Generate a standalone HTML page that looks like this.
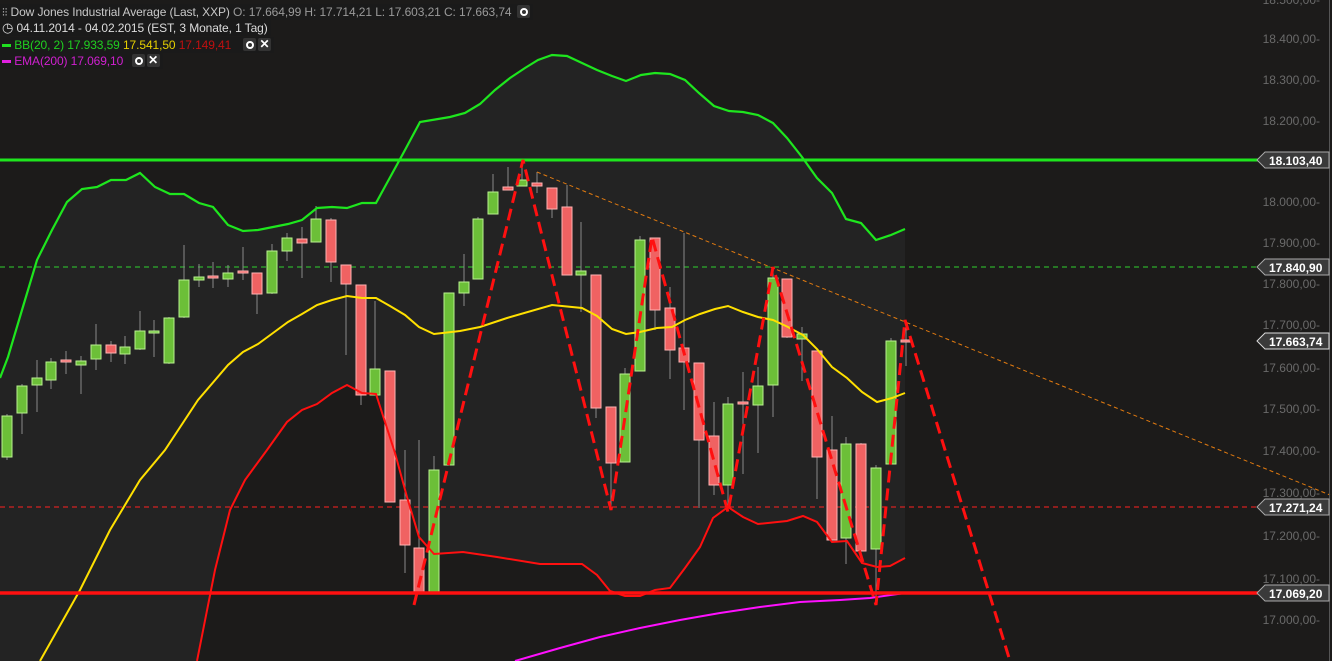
<!DOCTYPE html>
<html><head><meta charset="utf-8"><style>
html,body{margin:0;padding:0;background:#1c1b1a;width:1332px;height:661px;overflow:hidden;font-family:"Liberation Sans",sans-serif}
svg{position:absolute;left:0;top:0}
.g{fill:#6cbf38;stroke:#b9f08f;stroke-width:1}
.r{fill:#f06262;stroke:#ffb3b3;stroke-width:1}
.w{stroke:#8a8a8a;stroke-width:1}
.ax{fill:#6a6a6a;font-size:12px;text-anchor:end}
.lb{fill:#fff;font-size:12px;font-weight:bold}
.leg{position:absolute;left:0;font-size:12px;white-space:nowrap;background:#1a1a1a;padding:0 3px 0 2px;height:16px;line-height:16px;letter-spacing:-0.1px}
.ic{display:inline-block;width:13px;height:13px;background:#333;border-radius:2px;vertical-align:middle;position:relative;top:-1px;color:#fff;font-size:12px;line-height:13px;text-align:center;font-weight:bold;margin-left:2px}
.ic.o:after{content:"";position:absolute;left:3px;top:3px;width:4px;height:4px;border:2px solid #fff;border-radius:50%}
</style></head><body>
<svg width="1332" height="661" viewBox="0 0 1332 661">
<polygon fill="#232323" points="0,378 8,357 22,310 37,260 52,230 67,202 82,189 97,187 111,180 126,180 140,173 155,187 170,194 184,194 199,203 213,207 228,225 243,231 258,230 273,227 288,224 302,220 317,208 332,207 347,208 362,203 376,203 405,150 420,122 450,117 465,113 480,104 495,90 510,78 525,68 538,60 552,55 567,56 582,63 597,70 612,76 626,81 641,75 655,73 670,74 685,80 699,93 714,106 729,111 743,112 758,115 773,123 787,138 802,157 817,178 832,193 846,219 861,223 876,240 891,235 905,229 905,558 890,566 877,567 862,563 847,541 832,542 817,522 803,516 787,521 758,524 743,517 728,507 713,518 700,547 685,568 670,588 655,590 640,596 625,596 610,591 597,575 582,564 540,564 497,557 463,552 440,553 434,554 419,537 407,497 395,453 376,394 362,393 347,385 332,393 317,404 302,410 287,422 267,450 245,480 230,510 215,570 197,661 0,661"/>
<line x1="0" y1="160" x2="1258" y2="160" stroke="#1ee61e" stroke-width="3"/>
<line x1="0" y1="267" x2="1258" y2="267" stroke="#2fd02f" stroke-width="1" stroke-dasharray="5,4"/>
<line x1="0" y1="507" x2="1258" y2="507" stroke="#ff2020" stroke-width="1" stroke-dasharray="5,4"/>
<g>
<line class="w" x1="7" y1="414" x2="7" y2="460"/><rect class="g" x="2" y="416" width="10" height="41"/>
<line class="w" x1="22" y1="384" x2="22" y2="434"/><rect class="g" x="17" y="386" width="10" height="27"/>
<line class="w" x1="37" y1="360" x2="37" y2="412"/><rect class="g" x="32" y="378" width="10" height="7"/>
<line class="w" x1="51" y1="358" x2="51" y2="389"/><rect class="g" x="46" y="362" width="10" height="18"/>
<line class="w" x1="66" y1="351" x2="66" y2="374"/><rect class="r" x="61" y="360" width="10" height="2"/>
<line class="w" x1="81" y1="356" x2="81" y2="394"/><rect class="g" x="76" y="361" width="10" height="4"/>
<line class="w" x1="96" y1="324" x2="96" y2="370"/><rect class="g" x="91" y="345" width="10" height="14"/>
<line class="w" x1="111" y1="341" x2="111" y2="362"/><rect class="r" x="106" y="345" width="10" height="8"/>
<line class="w" x1="125" y1="336" x2="125" y2="364"/><rect class="g" x="120" y="347" width="10" height="7"/>
<line class="w" x1="140" y1="311" x2="140" y2="350"/><rect class="g" x="135" y="331" width="10" height="18"/>
<line class="w" x1="154" y1="320" x2="154" y2="357"/><rect class="g" x="149" y="331" width="10" height="2"/>
<line class="w" x1="169" y1="317" x2="169" y2="364"/><rect class="g" x="164" y="318" width="10" height="45"/>
<line class="w" x1="184" y1="245" x2="184" y2="318"/><rect class="g" x="179" y="280" width="10" height="37"/>
<line class="w" x1="199" y1="264" x2="199" y2="287"/><rect class="g" x="194" y="277" width="10" height="3"/>
<line class="w" x1="213" y1="262" x2="213" y2="288"/><rect class="r" x="208" y="276" width="10" height="2"/>
<line class="w" x1="228" y1="265" x2="228" y2="287"/><rect class="g" x="223" y="273" width="10" height="6"/>
<line class="w" x1="243" y1="247" x2="243" y2="280"/><rect class="r" x="238" y="271" width="10" height="2"/>
<line class="w" x1="257" y1="273" x2="257" y2="314"/><rect class="r" x="252" y="273" width="10" height="21"/>
<line class="w" x1="272" y1="244" x2="272" y2="294"/><rect class="g" x="267" y="251" width="10" height="42"/>
<line class="w" x1="287" y1="233" x2="287" y2="261"/><rect class="g" x="282" y="238" width="10" height="13"/>
<line class="w" x1="302" y1="227" x2="302" y2="278"/><rect class="r" x="297" y="239" width="10" height="4"/>
<line class="w" x1="316" y1="206" x2="316" y2="242"/><rect class="g" x="311" y="219" width="10" height="23"/>
<line class="w" x1="331" y1="218" x2="331" y2="282"/><rect class="r" x="326" y="220" width="10" height="42"/>
<line class="w" x1="346" y1="265" x2="346" y2="355"/><rect class="r" x="341" y="265" width="10" height="19"/>
<line class="w" x1="361" y1="285" x2="361" y2="405"/><rect class="r" x="356" y="285" width="10" height="110"/>
<line class="w" x1="375" y1="301" x2="375" y2="395"/><rect class="g" x="370" y="369" width="10" height="26"/>
<line class="w" x1="390" y1="371" x2="390" y2="502"/><rect class="r" x="385" y="371" width="10" height="131"/>
<line class="w" x1="405" y1="450" x2="405" y2="573"/><rect class="r" x="400" y="500" width="10" height="45"/>
<line class="w" x1="419" y1="440" x2="419" y2="592"/><rect class="r" x="414" y="548" width="10" height="44"/>
<line class="w" x1="434" y1="456" x2="434" y2="592"/><rect class="g" x="429" y="470" width="10" height="122"/>
<line class="w" x1="449" y1="293" x2="449" y2="465"/><rect class="g" x="444" y="293" width="10" height="172"/>
<line class="w" x1="464" y1="254" x2="464" y2="306"/><rect class="g" x="459" y="282" width="10" height="11"/>
<line class="w" x1="478" y1="217" x2="478" y2="279"/><rect class="g" x="473" y="219" width="10" height="60"/>
<line class="w" x1="493" y1="174" x2="493" y2="214"/><rect class="g" x="488" y="192" width="10" height="22"/>
<line class="w" x1="508" y1="167" x2="508" y2="190"/><rect class="r" x="503" y="187" width="10" height="3"/>
<line class="w" x1="522" y1="166" x2="522" y2="186"/><rect class="g" x="517" y="180" width="10" height="6"/>
<line class="w" x1="537" y1="172" x2="537" y2="193"/><rect class="r" x="532" y="183" width="10" height="3"/>
<line class="w" x1="552" y1="188" x2="552" y2="218"/><rect class="r" x="547" y="188" width="10" height="21"/>
<line class="w" x1="567" y1="185" x2="567" y2="275"/><rect class="r" x="562" y="207" width="10" height="68"/>
<line class="w" x1="581" y1="222" x2="581" y2="312"/><rect class="g" x="576" y="271" width="10" height="4"/>
<line class="w" x1="596" y1="275" x2="596" y2="418"/><rect class="r" x="591" y="275" width="10" height="133"/>
<line class="w" x1="611" y1="407" x2="611" y2="507"/><rect class="r" x="606" y="407" width="10" height="56"/>
<line class="w" x1="625" y1="368" x2="625" y2="462"/><rect class="g" x="620" y="374" width="10" height="88"/>
<line class="w" x1="640" y1="236" x2="640" y2="371"/><rect class="g" x="635" y="240" width="10" height="131"/>
<line class="w" x1="655" y1="238" x2="655" y2="330"/><rect class="r" x="650" y="238" width="10" height="72"/>
<line class="w" x1="670" y1="287" x2="670" y2="379"/><rect class="r" x="665" y="308" width="10" height="42"/>
<line class="w" x1="684" y1="233" x2="684" y2="410"/><rect class="r" x="679" y="348" width="10" height="14"/>
<line class="w" x1="699" y1="363" x2="699" y2="508"/><rect class="r" x="694" y="363" width="10" height="77"/>
<line class="w" x1="714" y1="402" x2="714" y2="495"/><rect class="r" x="709" y="436" width="10" height="49"/>
<line class="w" x1="728" y1="397" x2="728" y2="508"/><rect class="g" x="723" y="404" width="10" height="81"/>
<line class="w" x1="743" y1="372" x2="743" y2="474"/><rect class="r" x="738" y="402" width="10" height="2"/>
<line class="w" x1="758" y1="367" x2="758" y2="453"/><rect class="g" x="753" y="386" width="10" height="19"/>
<line class="w" x1="773" y1="267" x2="773" y2="417"/><rect class="g" x="768" y="278" width="10" height="107"/>
<line class="w" x1="787" y1="279" x2="787" y2="338"/><rect class="r" x="782" y="279" width="10" height="58"/>
<line class="w" x1="802" y1="327" x2="802" y2="381"/><rect class="g" x="797" y="334" width="10" height="5"/>
<line class="w" x1="817" y1="351" x2="817" y2="499"/><rect class="r" x="812" y="351" width="10" height="106"/>
<line class="w" x1="832" y1="416" x2="832" y2="540"/><rect class="r" x="827" y="450" width="10" height="90"/>
<line class="w" x1="846" y1="437" x2="846" y2="564"/><rect class="g" x="841" y="444" width="10" height="94"/>
<line class="w" x1="861" y1="443" x2="861" y2="551"/><rect class="r" x="856" y="444" width="10" height="107"/>
<line class="w" x1="876" y1="465" x2="876" y2="603"/><rect class="g" x="871" y="468" width="10" height="81"/>
<line class="w" x1="891" y1="338" x2="891" y2="464"/><rect class="g" x="886" y="341" width="10" height="123"/>
<line class="w" x1="906" y1="323" x2="906" y2="366"/><rect class="r" x="901" y="340" width="10" height="2"/>
</g>
<polyline fill="none" stroke="#1ee61e" stroke-width="2.2" points="0,378 8,357 22,310 37,260 52,230 67,202 82,189 97,187 111,180 126,180 140,173 155,187 170,194 184,194 199,203 213,207 228,225 243,231 258,230 273,227 288,224 302,220 317,208 332,207 347,208 362,203 376,203 405,150 420,122 450,117 465,113 480,104 495,90 510,78 525,68 538,60 552,55 567,56 582,63 597,70 612,76 626,81 641,75 655,73 670,74 685,80 699,93 714,106 729,111 743,112 758,115 773,123 787,138 802,157 817,178 832,193 846,219 861,223 876,240 891,235 905,229"/>
<polyline fill="none" stroke="#ffe000" stroke-width="2" points="40,661 80,590 110,530 140,480 165,450 198,400 228,365 243,352 258,344 273,333 288,322 302,314 317,305 332,300 347,296 362,298 376,298 390,306 405,315 419,327 434,334 460,331 480,327 507,318 552,305 582,308 597,316 612,329 626,334 640,332 657,328 672,327 685,320 700,314 715,309 728,306 743,312 758,317 773,320 788,327 803,335 817,349 832,367 847,378 862,392 877,402 892,398 905,393"/>
<polyline fill="none" stroke="#ff1010" stroke-width="2" points="197,661 215,570 230,510 245,480 267,450 287,422 302,410 317,404 332,393 347,385 362,393 376,394 395,453 407,497 419,537 434,554 463,552 497,557 540,564 582,564 597,575 610,591 625,596 640,596 655,590 670,588 685,568 700,547 713,518 728,507 743,517 758,524 787,521 803,516 817,522 832,542 847,541 862,563 877,567 890,566 905,558"/>
<polyline fill="none" stroke="#ff10ff" stroke-width="2" points="515,661 560,648 600,637 640,628 680,620 720,613 760,607 800,602 840,600 870,598 905,593"/>
<line x1="0" y1="593" x2="1258" y2="593" stroke="#ff1010" stroke-width="3.5"/>
<line x1="537" y1="172" x2="1330" y2="495" stroke="#e07a10" stroke-width="1" stroke-dasharray="4,3"/>
<polyline fill="none" stroke="#ff1010" stroke-width="3" stroke-dasharray="12,6" points="414,605 523,160 611,510 652,237 728,512 773,267 876,605 905,320 1010,661"/>
<line x1="1329.5" y1="0" x2="1329.5" y2="661" stroke="#555" stroke-width="1"/>
<g class="ax">
<text x="1320" y="4">18.500,00-</text>
<text x="1320" y="43">18.400,00-</text>
<text x="1320" y="84">18.300,00-</text>
<text x="1320" y="125">18.200,00-</text>
<text x="1320" y="206">18.000,00-</text>
<text x="1320" y="247">17.900,00-</text>
<text x="1320" y="288">17.800,00-</text>
<text x="1320" y="329">17.700,00-</text>
<text x="1320" y="372">17.600,00-</text>
<text x="1320" y="413">17.500,00-</text>
<text x="1320" y="455">17.400,00-</text>
<text x="1320" y="497">17.300,00-</text>
<text x="1320" y="540">17.200,00-</text>
<text x="1320" y="583">17.100,00-</text>
<text x="1320" y="624">17.000,00-</text>
</g>
<g>
<polygon points="1257,160 1265,152 1329,152 1329,168 1265,168" fill="#3a3a3a" stroke="#aaa"/>
<text class="lb" x="1269" y="165">18.103,40</text>
<polygon points="1257,267 1265,259 1329,259 1329,275 1265,275" fill="#3a3a3a" stroke="#aaa"/>
<text class="lb" x="1269" y="272">17.840,90</text>
<polygon points="1257,341 1265,333 1329,333 1329,349 1265,349" fill="#3a3a3a" stroke="#ddd"/>
<text class="lb" x="1269" y="346">17.663,74</text>
<polygon points="1257,507 1265,499 1329,499 1329,515 1265,515" fill="#3a3a3a" stroke="#aaa"/>
<text class="lb" x="1269" y="512">17.271,24</text>
<polygon points="1257,593 1265,585 1329,585 1329,601 1265,601" fill="#3a3a3a" stroke="#aaa"/>
<text class="lb" x="1269" y="598">17.069,20</text>
</g>
</svg>
<div class="leg" style="top:4px;color:#c8c8c8"><span style="font-size:11px;color:#ddd">⫶⫶</span> Dow Jones Industrial Average (Last, XXP) <span style="color:#9a9a9a">O: 17.664,99 H: 17.714,21 L: 17.603,21 C: 17.663,74</span> <span class="ic o"></span></div>
<div class="leg" style="top:20px;color:#dcdcdc"><span style="font-size:13px">◷</span> 04.11.2014 - 04.02.2015 (EST, 3 Monate, 1 Tag)</div>
<div class="leg" style="top:37px;color:#20d020"><span style="display:inline-block;width:9px;height:3px;background:#20e020;vertical-align:middle"></span> BB(20, 2) 17.933,59 <span style="color:#e6d000">17.541,50</span> <span style="color:#c01010">17.149,41</span> &nbsp;&nbsp;<span class="ic o"></span><span class="ic">✕</span></div>
<div class="leg" style="top:53px;color:#d020d0"><span style="display:inline-block;width:9px;height:3px;background:#e020e0;vertical-align:middle"></span> EMA(200) 17.069,10 &nbsp;<span class="ic o"></span><span class="ic">✕</span></div>
</body></html>
